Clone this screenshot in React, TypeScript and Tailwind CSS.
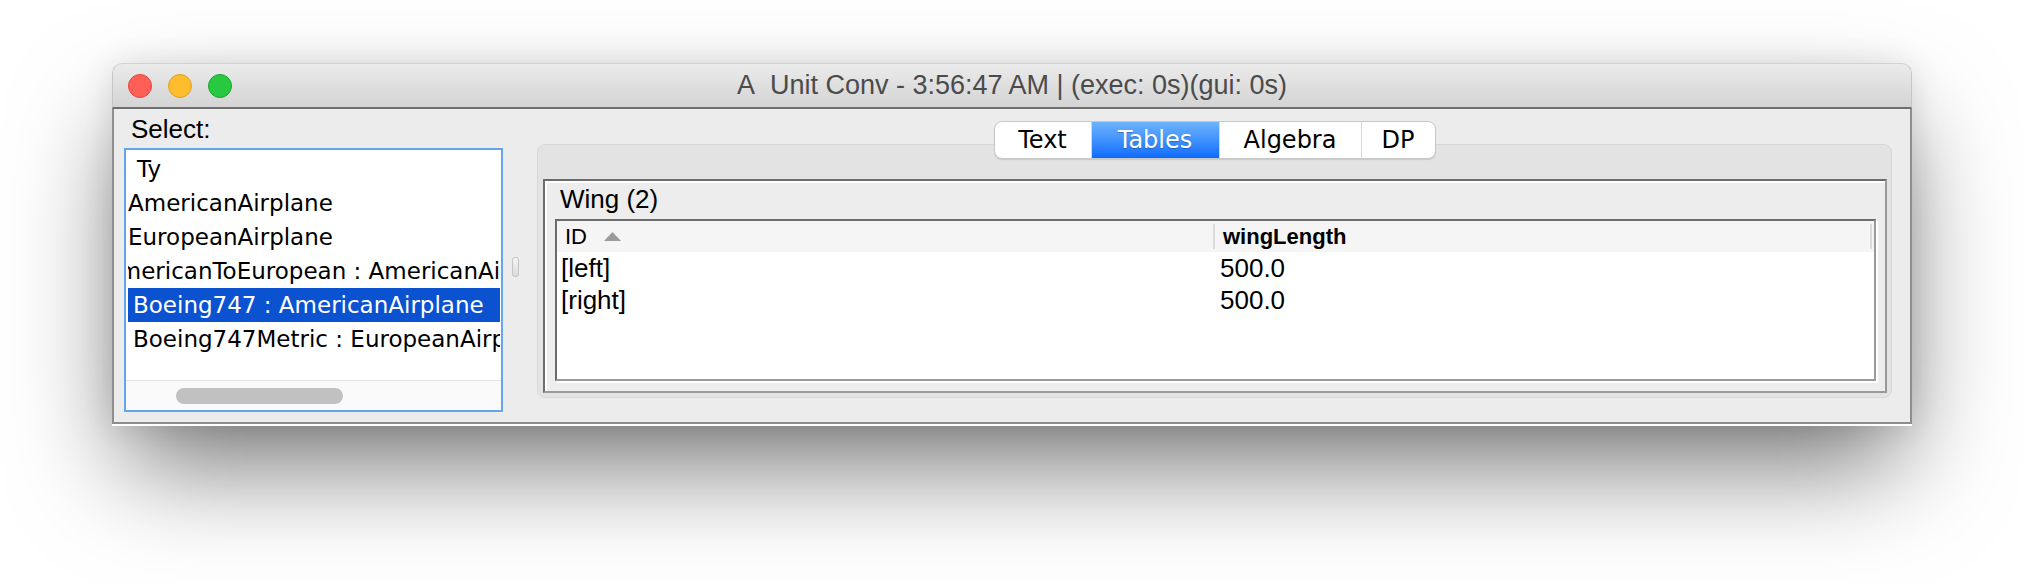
import { ChevronUp } from "lucide-react";

type ListItem = { label: string; shift: string; selected?: boolean };

const LIST_ITEMS: ListItem[] = [
  { label: "Ty", shift: "ml-[9px]" },
  { label: "AmericanAirplane", shift: "ml-0" },
  { label: "EuropeanAirplane", shift: "ml-0" },
  { label: "AmericanToEuropean : AmericanAirplane", shift: "-ml-[25px]" },
  { label: "Boeing747 : AmericanAirplane", shift: "ml-[5px]", selected: true },
  { label: "Boeing747Metric : EuropeanAirplane", shift: "ml-[5px]" },
];

const TABS = [
  { label: "Text", width: "w-[96px]" },
  { label: "Tables", width: "w-[128px]", active: true },
  { label: "Algebra", width: "w-[142px]" },
  { label: "DP", width: "w-[74px]" },
];

const ROWS = [
  { id: "[left]", wingLength: "500.0" },
  { id: "[right]", wingLength: "500.0" },
];

const sans = "font-['Liberation_Sans',Arial,sans-serif]";
const lucida = "font-['DejaVu_Sans',Verdana,sans-serif]";

function TrafficLights() {
  return (
    <div className="flex items-center gap-[16px] pl-[15px]">
      <span className="h-[24px] w-[24px] rounded-full border border-[#e2463f] bg-[#ff5f57]" />
      <span className="h-[24px] w-[24px] rounded-full border border-[#dfa023] bg-[#ffbd2e]" />
      <span className="h-[24px] w-[24px] rounded-full border border-[#17a82b] bg-[#28c840]" />
    </div>
  );
}

function TypeList() {
  return (
    <div className="flex h-[264px] flex-col border-2 border-[#63a6ec] bg-white">
      <div className="pt-[2px]">
        {LIST_ITEMS.map((item) => (
          <div
            key={item.label}
            className={[
              "ml-[2px] mr-[1px] h-[34px] overflow-hidden whitespace-nowrap text-[23px] leading-[34px]",
              lucida,
              item.selected ? "bg-[#0b52d1] text-white" : "text-black",
            ].join(" ")}
          >
            <span className={["inline-block", item.shift].join(" ")}>{item.label}</span>
          </div>
        ))}
      </div>
      <div className="flex-1" />
      <div className="h-[30px] border-t border-[#e4e4e4] bg-[#fafafa] pt-[7px]">
        <div className="ml-[50px] h-[16px] w-[167px] rounded-full bg-[#c1c1c1]" />
      </div>
    </div>
  );
}

function SegmentedTabs() {
  return (
    <div className="relative z-10 flex h-[38px] overflow-hidden rounded-[8px] border border-[#c8c8c8] bg-white shadow-[0_1px_1px_rgba(0,0,0,0.12)]">
      {TABS.map((tab, i) => (
        <div
          key={tab.label}
          className={[
            "flex items-center justify-center text-[24px]",
            lucida,
            tab.width,
            i > 0 ? "border-l border-[#d8d8d8]" : "",
            tab.active
              ? "bg-gradient-to-b from-[#6cb3fb] to-[#0a6bfd] text-white [text-shadow:0_1px_1px_rgba(0,0,0,0.25)]"
              : "text-black",
          ].join(" ")}
        >
          {tab.label}
        </div>
      ))}
    </div>
  );
}

function WingTable() {
  return (
    <div className="ml-[10px] mr-[9px] mt-[5px] flex h-[162px] flex-col border-2 border-t-[#6c6c6c] border-l-[#6c6c6c] border-r-[#9a9a9a] border-b-[#9a9a9a] bg-white shadow-[2px_2px_0_#ffffff]">
      <div className={`flex h-[31px] items-center bg-[#f5f5f5] text-[22px] text-black ${sans}`}>
        <div className="flex w-[656px] items-center pl-[8px]">
          <span>ID</span>
          <svg width="17" height="9" viewBox="0 0 17 9" className="ml-[17px]">
            <path d="M8.5 0 L17 9 L0 9 Z" fill="#9b9b9b" />
          </svg>
        </div>
        <div className="h-[25px] w-[2px] bg-[#dadada]" />
        <div className="flex-1 pl-[8px] font-bold">wingLength</div>
        <div className="h-[25px] w-[2px] bg-[#dadada]" />
        <div className="w-[2px]" />
      </div>
      {ROWS.map((row) => (
        <div key={row.id} className={`flex h-[32px] items-center text-[26px] leading-[32px] text-black ${sans}`}>
          <div className="w-[658px] pl-[4px]">{row.id}</div>
          <div className="flex-1 pl-[5px]">{row.wingLength}</div>
        </div>
      ))}
    </div>
  );
}

export default function App() {
  return (
    <div className="h-[586px] w-[2024px] overflow-hidden bg-white pl-[112px] pt-[63px]">
      <div className="w-[1800px] rounded-t-[10px] shadow-[0_50px_100px_-12px_rgba(0,0,0,0.55),0_0_30px_rgba(0,0,0,0.1)]">
        {/* title bar */}
        <div className="grid h-[46px] grid-cols-[1fr_auto_1fr] items-center rounded-t-[10px] border-x border-t border-b-2 border-x-[#c6c6c6] border-t-[#d2d2d2] border-b-[#6e6e6e] bg-gradient-to-b from-[#ebebeb] to-[#d4d4d4]">
          <TrafficLights />
          <div className={`text-[27px] text-[#4b4b4b] ${sans}`}>
            A&nbsp; Unit Conv - 3:56:47 AM | (exec: 0s)(gui: 0s)
          </div>
          <div />
        </div>

        {/* body */}
        <div className="flex h-[315px] items-start border-x-2 border-b-2 border-[#8e8e8e] bg-[#ececec] pl-[10px] pr-[18px]">
          <div className="flex w-[379px] flex-col pt-[5px]">
            <div className={`h-[30px] pl-[7px] text-[26px] leading-[30px] text-black ${sans}`}>Select:</div>
            <div className="mt-[4px]">
              <TypeList />
            </div>
          </div>

          <div className="w-[34px] pl-[9px] pt-[148px]">
            <div className="h-[20px] w-[7px] rounded-[3px] border border-[#c4c4c4] bg-gradient-to-b from-[#f4f4f4] to-[#dcdcdc]" />
          </div>

          <div className="flex flex-1 flex-col items-center pt-[12px]">
            <SegmentedTabs />
            <div className="-mt-[15px] h-[254px] w-full rounded-[8px] border border-[#d7d7d7] bg-[#e3e3e3] pb-[4px] pl-[5px] pr-[4px] pt-[34px]">
              <div className="flex h-[214px] flex-col border-2 border-t-[#6c6c6c] border-l-[#6c6c6c] border-r-[#9a9a9a] border-b-[#9a9a9a] bg-[#ededed] shadow-[inset_2px_2px_0_#ffffff]">
                <div className={`h-[30px] pl-[15px] pt-[3px] text-[26px] leading-[30px] text-black ${sans} box-content`}>
                  Wing (2)
                </div>
                <WingTable />
              </div>
            </div>
          </div>
        </div>
        <div className="h-[2px] bg-white" />
      </div>
    </div>
  );
}
